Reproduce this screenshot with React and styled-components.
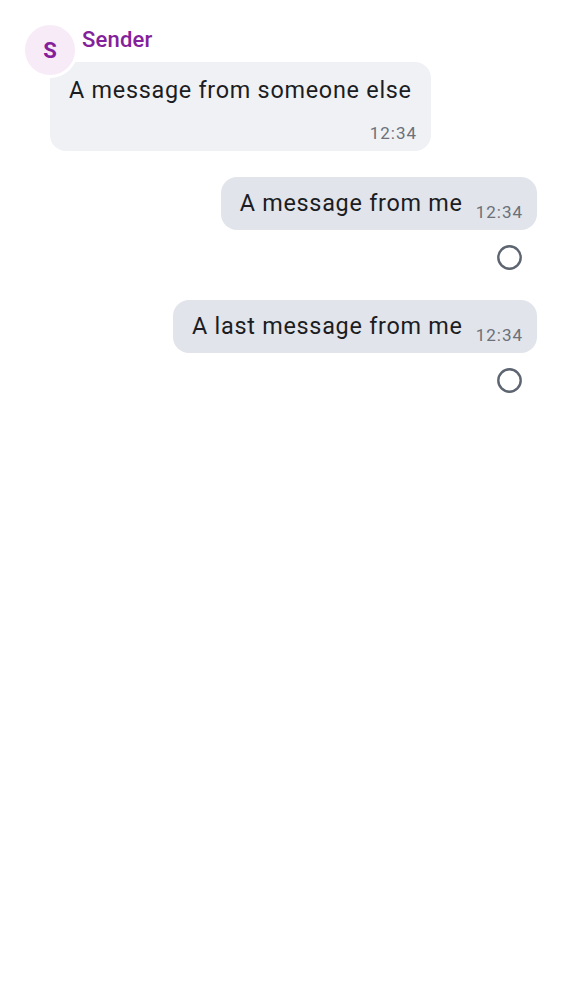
import styled, { createGlobalStyle } from 'styled-components'

const GlobalStyle = createGlobalStyle`
    body {
        margin: 0;
        background: #ffffff;
        font-family: Roboto, "Noto Sans", "DejaVu Sans", sans-serif;
        color: #1c1d22;
    }
`

const Timeline = styled.div`
    display: flex;
    flex-direction: column;
    padding: 25px;
`

const IncomingGroup = styled.div`
    position: relative;
    display: flex;
    flex-direction: column;
    align-items: flex-start;
    padding-left: 25px;
    margin-bottom: 26px;
`

const Avatar = styled.div`
    position: absolute;
    left: -3px;
    top: -3px;
    z-index: 1;
    width: 50px;
    height: 50px;
    border: 3px solid #ffffff;
    border-radius: 50%;
    background: #f8ebf8;
    color: #85209b;
    font-size: 22px;
    font-weight: 700;
    display: flex;
    align-items: center;
    justify-content: center;
`

const SenderName = styled.div`
    padding: 2px 0 0 32px;
    margin-bottom: 9px;
    font-size: 22px;
    line-height: 26px;
    letter-spacing: 0.2px;
    font-weight: 500;
    color: #85209b;
`

const OutgoingGroup = styled.div`
    display: flex;
    flex-direction: column;
    align-items: flex-end;
    margin-bottom: 30px;
`

const Bubble = styled.div`
    display: flex;
    flex-wrap: wrap;
    align-items: flex-end;
    justify-content: flex-end;
    column-gap: 13px;
    row-gap: ${(p) => (p.$incoming ? '16px' : '0')};
    max-width: 381px;
    box-sizing: border-box;
    padding: ${(p) => (p.$incoming ? '12px 14px 10px 19px' : '10px 14px 10px 19px')};
    border-radius: 16px;
    background: ${(p) => (p.$incoming ? '#f0f1f5' : '#e1e4ea')};
`

const Body = styled.span`
    flex: 1 1 auto;
    font-size: 23.4px;
    line-height: 33px;
    letter-spacing: 0.73px;
`

const Time = styled.span`
    font-size: 17px;
    line-height: 20px;
    letter-spacing: 1px;
    color: #6b7079;
    margin-bottom: -2px;
`

const Status = styled.svg`
    display: block;
    margin: 15px 15px 0 0;
`

const PendingIcon = () => (
    <Status width="25" height="25" viewBox="0 0 25 25">
        <circle cx="12.5" cy="12.5" r="11.2" fill="none" stroke="#5d6571" strokeWidth="2.4" />
    </Status>
)

const outgoing = [
    { id: 1, text: 'A message from me', time: '12:34' },
    { id: 2, text: 'A last message from me', time: '12:34' },
]

export default function App() {
    return (
        <>
            <GlobalStyle />
            <Timeline>
                <IncomingGroup>
                    <Avatar>S</Avatar>
                    <SenderName>Sender</SenderName>
                    <Bubble $incoming>
                        <Body>A message from someone else</Body>
                        <Time>12:34</Time>
                    </Bubble>
                </IncomingGroup>
                {outgoing.map((msg) => (
                    <OutgoingGroup key={msg.id}>
                        <Bubble>
                            <Body>{msg.text}</Body>
                            <Time>{msg.time}</Time>
                        </Bubble>
                        <PendingIcon />
                    </OutgoingGroup>
                ))}
            </Timeline>
        </>
    )
}
